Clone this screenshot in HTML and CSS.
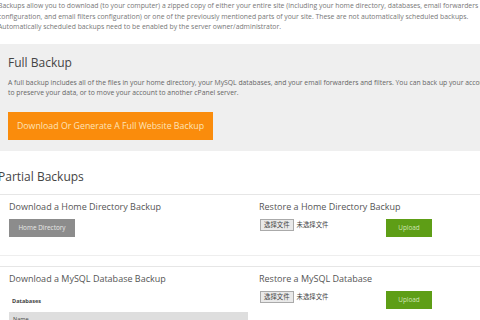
FILE: index.html
```html
<!DOCTYPE html>
<html lang="en">
<head>
    <meta charset="UTF-8">
    <meta name="viewport" content="width=device-width, initial-scale=1.0">
    <title>Backup</title>
    <link rel="stylesheet" href="styles.css">
</head>
<body>
    <div class="page">
        <p class="intro">Backups allow you to download (to your computer) a zipped copy of either your entire site (including your home directory, databases, email forwarders<br>configuration, and email filters configuration) or one of the previously mentioned parts of your site. These are not automatically scheduled backups.<br>Automatically scheduled backups need to be enabled by the server owner/administrator.</p>

        <!-- Backup completo -->
        <div class="full">
            <h2>Full Backup</h2>
            <p>A full backup includes all of the files in your home directory, your MySQL databases, and your email forwarders and filters. You can back up your account<br>to preserve your data, or to move your account to another cPanel server.</p>
            <a href="#" class="btn btn-orange">Download Or Generate A Full Website Backup</a>
        </div>

        <h2 class="partial-title">Partial Backups</h2>

        <div class="row">
            <div class="col">
                <h3>Download a Home Directory Backup</h3>
                <a href="#" class="btn btn-gray">Home Directory</a>
            </div>
            <div class="col">
                <h3>Restore a Home Directory Backup</h3>
                <div class="upload">
                    <div class="file"><span class="file-btn">选择文件</span><span class="file-name">未选择文件</span></div>
                    <a href="#" class="btn btn-green">Upload</a>
                </div>
            </div>
        </div>

        <div class="row">
            <div class="col">
                <h3>Download a MySQL Database Backup</h3>
                <div class="db-label">Databases</div>
                <div class="db-head">Name</div>
            </div>
            <div class="col">
                <h3>Restore a MySQL Database</h3>
                <div class="upload">
                    <div class="file"><span class="file-btn">选择文件</span><span class="file-name">未选择文件</span></div>
                    <a href="#" class="btn btn-green">Upload</a>
                </div>
            </div>
        </div>
    </div>
</body>
</html>
```

FILE: styles.css
```css
* {
    margin: 0;
    padding: 0;
    box-sizing: border-box;
}

body {
    font-family: "Open Sans", "Noto Sans CJK SC", sans-serif;
    background-color: #fff;
    color: #555;
    overflow: hidden;
    width: 480px;
    height: 320px;
}

.page {
    width: 520px;
    margin-left: -2px;
}

.intro {
    font-size: 6.85px;
    line-height: 10.5px;
    color: #777;
    white-space: nowrap;
    padding-top: 1px;
    margin-bottom: 11px;
}

.full {
    background-color: #efefef;
    padding: 11px 10px 11px;
}

.full h2 {
    font-size: 12px;
    line-height: 16px;
    font-weight: normal;
    color: #444;
    margin-bottom: 7px;
}

.full p {
    font-size: 6.8px;
    line-height: 10.5px;
    color: #666;
    white-space: nowrap;
    margin-bottom: 13px;
}

.btn {
    display: flex;
    align-items: center;
    justify-content: center;
    text-decoration: none;
}

.btn-orange {
    background-color: #fa8c0c;
    color: #fde3b8;
    font-size: 8.8px;
    height: 28px;
    width: 205px;
}

.partial-title {
    font-size: 12px;
    line-height: 16px;
    font-weight: normal;
    color: #444;
    margin: 18px 0 9px;
}

.row {
    display: flex;
    border-top: 1px solid #e6e6e6;
    border-bottom: 1px solid #eee;
    padding: 6px 0 18px 11px;
    margin-bottom: 10px;
}

.col {
    width: 250px;
}

.col h3 {
    font-size: 9px;
    line-height: 12px;
    font-weight: normal;
    color: #555;
    margin-bottom: 6px;
}

.btn-gray {
    background-color: #8c8c8c;
    color: #e8e8e8;
    font-size: 6.4px;
    height: 18px;
    width: 66px;
}

.upload {
    display: flex;
    align-items: flex-start;
}

.file {
    display: flex;
    align-items: center;
    width: 127px;
    font-size: 6.4px;
    color: #444;
    font-family: "Noto Sans CJK SC", sans-serif;
}

.file-btn {
    border: 1px solid #aaa;
    background-color: #e9e9e9;
    height: 12px;
    line-height: 10px;
    padding: 0 3px;
    margin: 0 3px 0 1px;
}

.btn-green {
    background-color: #5e9e16;
    color: #cfe6b5;
    font-size: 6.4px;
    height: 18px;
    width: 46px;
}

.db-label {
    font-size: 5.6px;
    font-weight: bold;
    color: #444;
    margin: 12px 0 7px 3px;
}

.db-head {
    background-color: #dedede;
    height: 12px;
    width: 239px;
    font-size: 5.6px;
    color: #444;
    padding: 3px 4px;
}
```
